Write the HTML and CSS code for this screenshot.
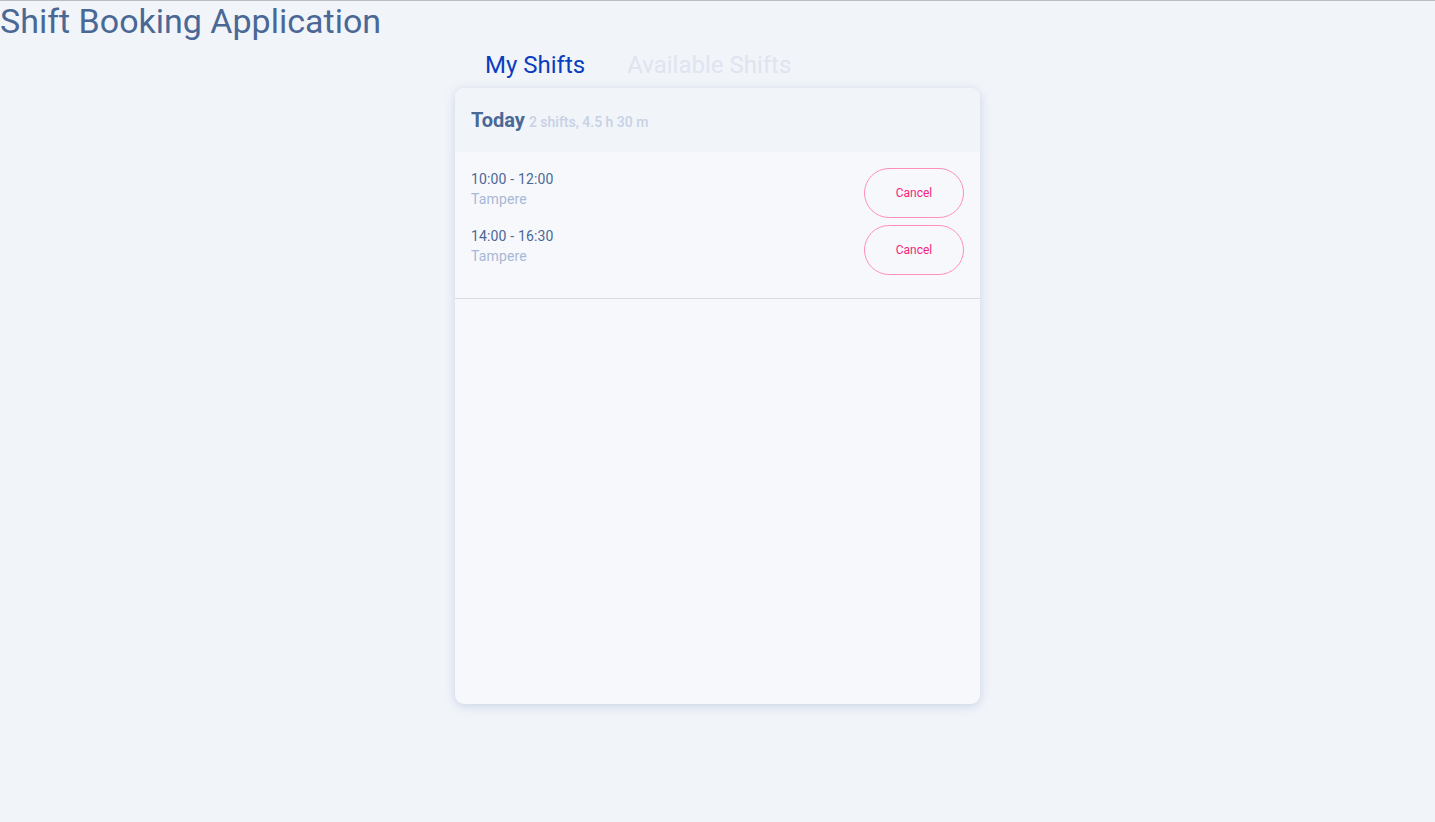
FILE: index.html
```html
<!DOCTYPE html>
<html>
<head>
<meta charset="utf-8">
<link rel="stylesheet" href="styles.css">
</head>
<body>
<h1 class="title">Shift Booking Application</h1>
<main class="wrap">
  <nav class="tabs">
    <span class="tab active">My Shifts</span>
    <span class="tab">Available Shifts</span>
  </nav>
  <section class="card">
    <header class="day-head">
      <span class="day">Today</span>
      <span class="day-meta">2 shifts, 4.5 h 30 m</span>
    </header>
    <div class="list">
      <div class="row">
        <div class="info">
          <div class="time">10:00 - 12:00</div>
          <div class="place">Tampere</div>
        </div>
        <button class="cancel">Cancel</button>
      </div>
      <div class="row">
        <div class="info">
          <div class="time">14:00 - 16:30</div>
          <div class="place">Tampere</div>
        </div>
        <button class="cancel">Cancel</button>
      </div>
    </div>
  </section>
</main>
</body>
</html>
```
FILE: styles.css
```css
html, body { margin: 0; padding: 0; }
body {
  background: #f1f4f9;
  border-top: 1px solid #b9bcc2;
  font-family: Roboto, "Liberation Sans", sans-serif;
  min-height: 821px;
  box-sizing: border-box;
}
.title {
  margin: 0;
  font-size: 34px;
  font-weight: 400;
  line-height: 40px;
  color: #4a6896;
}
.wrap {
  width: 525px;
  margin: 0 auto;
}
.tabs {
  display: flex;
  gap: 42px;
  padding-left: 30px;
  height: 47px;
  align-items: center;
}
.tab {
  font-size: 24px;
  color: #dfe4f0;
  line-height: 28px;
}
.tab.active { color: #0a3dbf; }
.card {
  height: 616px;
  background: #f7f8fc;
  border-radius: 9px;
  box-shadow: 0 2px 10px rgba(170, 185, 215, 0.55);
  overflow: hidden;
}
.day-head {
  height: 64px;
  background: #f1f4f9;
  display: flex;
  align-items: center;
  padding: 0 16px;
  gap: 4px;
}
.day {
  font-size: 20px;
  font-weight: 700;
  color: #4a6896;
}
.day-meta {
  font-size: 14px;
  font-weight: 500;
  color: #c7d1e5;
  padding-top: 4px;
}
.list {
  padding: 16px 16px 23px;
  border-bottom: 1px solid #d9dce3;
  display: flex;
  flex-direction: column;
  gap: 7px;
}
.row {
  display: flex;
  justify-content: space-between;
  align-items: flex-start;
  height: 50px;
}
.info {
  font-size: 14px;
  line-height: 20px;
  margin-top: 1px;
  letter-spacing: 0.15px;
}
.time { color: #4a6896; }
.place { color: #a7b8d6; }
.cancel {
  width: 100px;
  height: 50px;
  border: 1px solid #ff8fb6;
  border-radius: 25px;
  background: transparent;
  color: #f2267a;
  font-family: Roboto, "Liberation Sans", sans-serif;
  font-size: 12px;
  padding: 0;
}
```
